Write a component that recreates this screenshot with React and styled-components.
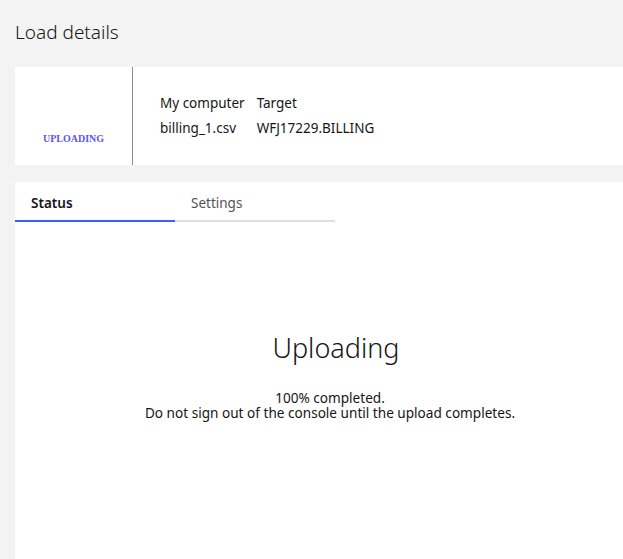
import styled, { createGlobalStyle } from "styled-components";

const GlobalStyle = createGlobalStyle`
  html, body {
    margin: 0;
    padding: 0;
    background: #f3f3f3;
    overflow: hidden;
  }
  body {
    font-family: "Noto Sans", "Open Sans", sans-serif;
    color: #161616;
  }
`;

const Page = styled.div`
  width: 630px;
  padding: 0 0 0 15px;
  min-height: 559px;
  display: flex;
  flex-direction: column;
`;

const Title = styled.h1`
  margin: 0;
  height: 67px;
  display: flex;
  align-items: center;
  padding-bottom: 4px;
  box-sizing: border-box;
  font-size: 19px;
  font-weight: 300;
`;

const SummaryCard = styled.section`
  display: flex;
  background: #fff;
  height: 98px;
`;

const StateCell = styled.div`
  width: 118px;
  border-right: 1px solid #8d8d8d;
  display: flex;
  align-items: flex-end;
  justify-content: center;
  padding-bottom: 21px;
  box-sizing: border-box;
`;

const StateLabel = styled.span`
  font-family: "Liberation Serif", serif;
  font-weight: bold;
  font-size: 10px;
  color: #5b55f5;
`;

const InfoGrid = styled.div`
  display: grid;
  grid-template-columns: auto auto;
  justify-content: start;
  column-gap: 12px;
  row-gap: 7px;
  align-content: center;
  padding: 0 0 2px 27px;
  font-size: 13.5px;
`;

const DetailCard = styled.section`
  margin-top: 17px;
  background: #fff;
  flex: 1;
  display: flex;
  flex-direction: column;
`;

const TabList = styled.div`
  display: flex;
`;

const Tab = styled.div`
  width: 160px;
  box-sizing: border-box;
  padding: 12px 16px 8px;
  font-size: 13.5px;
  font-weight: ${(p) => (p.active ? 600 : 400)};
  color: ${(p) => (p.active ? "#161616" : "#525252")};
  border-bottom: 2px solid ${(p) => (p.active ? "#3d5ef5" : "#e0e0e0")};
`;

const StatusPanel = styled.div`
  display: flex;
  flex-direction: column;
  align-items: center;
  padding-top: 107px;
`;

const StatusHeading = styled.h2`
  margin: 0 0 24px 12px;
  font-size: 27px;
  font-weight: 300;
`;

const StatusText = styled.p`
  margin: 0;
  font-size: 13.6px;
  line-height: 15px;
  text-align: center;
`;

export default function App() {
  return (
    <>
      <GlobalStyle />
      <Page>
        <Title>Load details</Title>
        <SummaryCard>
          <StateCell>
            <StateLabel>UPLOADING</StateLabel>
          </StateCell>
          <InfoGrid>
            <span>My computer</span>
            <span>Target</span>
            <span>billing_1.csv</span>
            <span>WFJ17229.BILLING</span>
          </InfoGrid>
        </SummaryCard>
        <DetailCard>
          <TabList>
            <Tab active>Status</Tab>
            <Tab>Settings</Tab>
          </TabList>
          <StatusPanel>
            <StatusHeading>Uploading</StatusHeading>
            <StatusText>
              100% completed.
              <br />
              Do not sign out of the console until the upload completes.
            </StatusText>
          </StatusPanel>
        </DetailCard>
      </Page>
    </>
  );
}
